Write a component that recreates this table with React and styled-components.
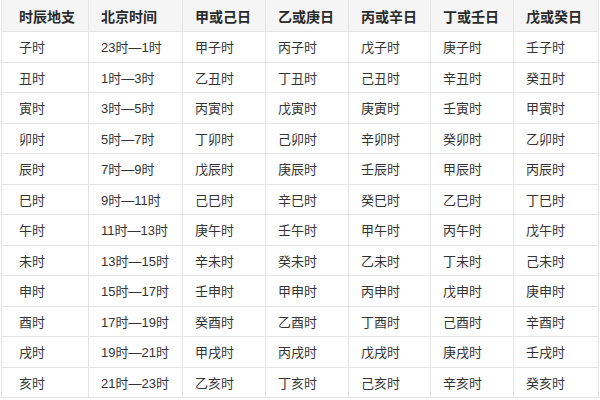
import React from "react";
import styled, { createGlobalStyle } from "styled-components";

const GlobalStyle = createGlobalStyle`
  html, body {
    margin: 0;
    padding: 0;
    background: #ffffff;
  }
  body {
    font-family: "Liberation Sans", "Noto Sans CJK SC", sans-serif;
  }
`;

const headers = ["时辰地支", "北京时间", "甲或己日", "乙或庚日", "丙或辛日", "丁或壬日", "戊或癸日"];

const rows = [
  ["子时", "23时—1时", "甲子时", "丙子时", "戊子时", "庚子时", "壬子时"],
  ["丑时", "1时—3时", "乙丑时", "丁丑时", "己丑时", "辛丑时", "癸丑时"],
  ["寅时", "3时—5时", "丙寅时", "戊寅时", "庚寅时", "壬寅时", "甲寅时"],
  ["卯时", "5时—7时", "丁卯时", "己卯时", "辛卯时", "癸卯时", "乙卯时"],
  ["辰时", "7时—9时", "戊辰时", "庚辰时", "壬辰时", "甲辰时", "丙辰时"],
  ["巳时", "9时—11时", "己巳时", "辛巳时", "癸巳时", "乙巳时", "丁巳时"],
  ["午时", "11时—13时", "庚午时", "壬午时", "甲午时", "丙午时", "戊午时"],
  ["未时", "13时—15时", "辛未时", "癸未时", "乙未时", "丁未时", "己未时"],
  ["申时", "15时—17时", "壬申时", "甲申时", "丙申时", "戊申时", "庚申时"],
  ["酉时", "17时—19时", "癸酉时", "乙酉时", "丁酉时", "己酉时", "辛酉时"],
  ["戌时", "19时—21时", "甲戌时", "丙戌时", "戊戌时", "庚戌时", "壬戌时"],
  ["亥时", "21时—23时", "乙亥时", "丁亥时", "己亥时", "辛亥时", "癸亥时"],
];

const Table = styled.div`
  display: grid;
  grid-template-columns: 87px 94px 83px 83px 82px 83px 85px;
  grid-template-rows: 32px repeat(12, 30.5px);
  margin-left: 1px;
  width: 597px;
  border-left: 1px solid #e4e4e4;
  box-sizing: border-box;
`;

const Cell = styled.div`
  display: flex;
  align-items: center;
  box-sizing: border-box;
  padding-left: ${({ $first }) => ($first ? "17px" : "12px")};
  border-right: 1px solid #e4e4e4;
  border-bottom: 1px solid #e4e4e4;
  font-size: 13px;
  color: #333333;
  white-space: nowrap;
  overflow: hidden;
`;

const HeadCell = styled(Cell)`
  background: #f5f5f5;
  font-weight: bold;
  font-size: 14px;
  color: #2a2a2a;
`;

export default function App() {
  return (
    <>
      <GlobalStyle />
      <Table>
        {headers.map((h, i) => (
          <HeadCell key={h} $first={i === 0}>
            {h}
          </HeadCell>
        ))}
        {rows.map((row) =>
          row.map((c, i) => (
            <Cell key={row[0] + i} $first={i === 0}>
              {c}
            </Cell>
          ))
        )}
      </Table>
    </>
  );
}
